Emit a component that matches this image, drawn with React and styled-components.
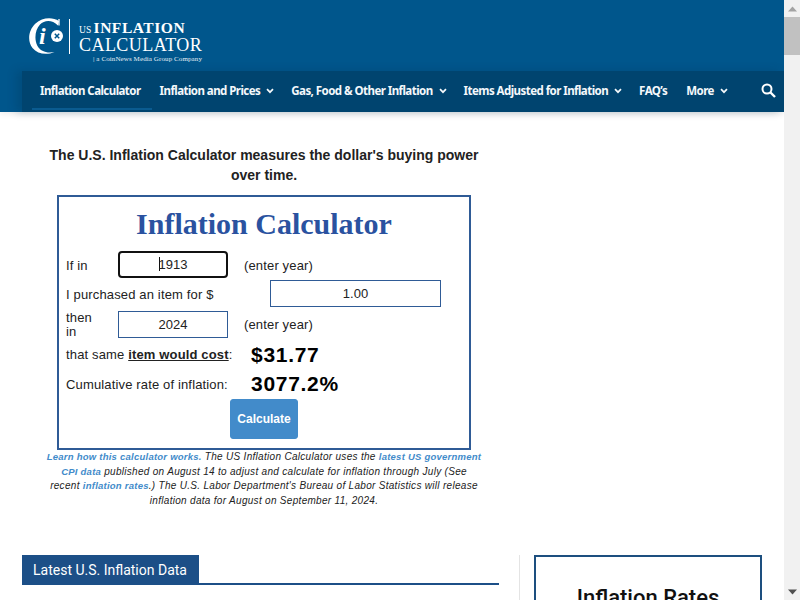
import React from "react";
import styled, { createGlobalStyle } from "styled-components";

const Global = createGlobalStyle`
  html, body { margin: 0; padding: 0; height: 600px; overflow: hidden; background: #fff; }
  body { font-family: "Liberation Sans", Arial, sans-serif; }
  * { box-sizing: border-box; }
`;

const Page = styled.div`
  display: flex;
  width: 800px;
  height: 600px;
  overflow: hidden;
`;
const Main = styled.div`
  width: 784px;
  height: 600px;
  overflow: hidden;
  flex: none;
`;
const Scrollbar = styled.div`
  width: 16px;
  height: 600px;
  flex: none;
  background: #f1f1f1;
  display: flex;
  flex-direction: column;
  align-items: center;
`;
const ScrollArrow = styled.div`
  height: 17px;
  flex: none;
  display: flex;
  align-items: center;
  justify-content: center;
`;
const ScrollThumb = styled.div`
  width: 100%;
  height: 38px;
  flex: none;
  background: #c1c1c1;
`;
const ScrollSpace = styled.div`
  flex: 1;
`;

const Header = styled.header`
  background: #00568c;
  height: 112px;
  display: flex;
  flex-direction: column;
  box-shadow: 0 2px 6px rgba(0, 0, 0, 0.08);
`;
const LogoRow = styled.div`
  height: 71px;
  flex: none;
  padding: 17px 0 0 28px;
  display: flex;
  align-items: flex-start;
`;
const LogoDivider = styled.div`
  width: 1px;
  height: 35px;
  margin: 2px 9px 0 5px;
  background: #fff;
`;
const LogoWords = styled.div`
  display: flex;
  flex-direction: column;
  color: #fff;
  font-family: "Liberation Serif", "Times New Roman", serif;
`;
const LogoTop = styled.div`
  display: flex;
  align-items: baseline;
  height: 17px;
  line-height: 17px;
  margin-top: 2px;
`;
const LogoUs = styled.span`
  font-size: 9.5px;
  margin-right: 2px;
  letter-spacing: 0.2px;
`;
const LogoStrong = styled.span`
  font-size: 15.5px;
  font-weight: 700;
  letter-spacing: 0.55px;
`;
const LogoBottom = styled.div`
  font-size: 18px;
  line-height: 17px;
  letter-spacing: 0.45px;
  height: 17px;
  margin-top: 1px;
`;
const LogoTag = styled.div`
  font-size: 7px;
  line-height: 8px;
  letter-spacing: 0.1px;
  margin: 1px 0 0 14px;
  white-space: nowrap;
  color: #e6eef4;
`;

const Nav = styled.nav`
  height: 41px;
  margin-left: 22px;
  padding: 0 0 2px 10px;
  background: #00446f;
  display: flex;
  align-items: stretch;
  box-shadow: -6px 0 8px rgba(0, 50, 85, 0.25);
`;
const NavItem = styled.a`
  display: flex;
  align-items: center;
  gap: 6px;
  height: 100%;
  padding: 2px ${(p) => p.$pad || 9}px 0 8px;
  color: #f4f8fb;
  font-family: "Noto Sans", sans-serif;
  font-size: 11.5px;
  font-weight: 700;
  letter-spacing: -0.55px;
  white-space: nowrap;
  border-bottom: 2px solid ${(p) => (p.$active ? "#0a5b90" : "transparent")};
`;
const NavSearch = styled.div`
  margin-left: auto;
  width: 23px;
  display: flex;
  align-items: center;
  color: #fff;
`;

const Content = styled.div`
  display: flex;
  padding: 0 0 0 22px;
  flex-direction: column;
`;
const TopArea = styled.div`
  width: 484px;
  padding-top: 33px;
  display: flex;
  flex-direction: column;
  align-items: center;
`;
const Intro = styled.p`
  margin: 0 0 10px;
  width: 445px;
  text-align: center;
  font-size: 14px;
  line-height: 20px;
  font-weight: 700;
  letter-spacing: 0;
  color: #222;
`;
const CalcBox = styled.div`
  width: 414px;
  height: 255px;
  border: 2px solid #2f5b96;
  padding: 0 7px;
  display: flex;
  flex-direction: column;
`;
const CalcTitle = styled.h1`
  margin: 8px 0 0;
  height: 46px;
  text-align: center;
  font-family: "Liberation Serif", "Times New Roman", serif;
  font-size: 30px;
  line-height: 38px;
  font-weight: 700;
  color: #2a52a0;
`;
const Row = styled.div`
  display: flex;
  align-items: center;
  height: ${(p) => p.$h}px;
  margin-bottom: ${(p) => p.$mb || 0}px;
  font-size: 13px;
  letter-spacing: 0.15px;
  color: #222;
`;
const Label = styled.div`
  width: ${(p) => p.$w}px;
  flex: none;
  line-height: 14px;
  padding-top: ${(p) => p.$top || 0}px;
`;
const Field = styled.div`
  width: ${(p) => p.$w}px;
  height: 27px;
  flex: none;
  border: ${(p) => (p.$focus ? "2px solid #111" : "1px solid #2f5b96")};
  border-radius: ${(p) => (p.$focus ? "4px" : "0")};
  display: flex;
  align-items: center;
  justify-content: center;
  font-size: 13px;
  letter-spacing: 0;
  color: #222;
  padding-bottom: 1px;
`;
const Caret = styled.span`
  display: inline-block;
  width: 1px;
  height: 14px;
  background: #111;
  margin-right: -1px;
`;
const Hint = styled.div`
  margin-left: 16px;
  padding-top: ${(p) => p.$top || 0}px;
`;
const Strong = styled.u`
  font-weight: 700;
`;
const Result = styled.div`
  font-size: 21px;
  font-weight: 700;
  color: #000;
  letter-spacing: 0.7px;
`;
const ButtonRow = styled.div`
  display: flex;
  justify-content: center;
`;
const CalcButton = styled.button`
  width: 68px;
  height: 40px;
  border: 1px solid #428bca;
  border-radius: 3px;
  background: #428bca;
  color: #fff;
  font-family: "Liberation Sans", Arial, sans-serif;
  font-size: 12px;
  font-weight: 700;
  padding: 0;
`;
const Note = styled.p`
  margin: 0;
  width: 436px;
  text-align: center;
  font-size: 10px;
  line-height: 14.5px;
  letter-spacing: 0.3px;
  font-style: italic;
  color: #222;
`;
const NoteLink = styled.a`
  color: #428bca;
  font-size: 9.5px;
  letter-spacing: 0.24px;
  font-weight: 700;
`;

const Lower = styled.div`
  display: flex;
  margin-top: 47px;
`;
const LeftCol = styled.div`
  width: 477px;
  flex: none;
`;
const SectionHead = styled.div`
  height: 30px;
  border-bottom: 2px solid #1c4f87;
`;
const SectionTab = styled.div`
  display: inline-flex;
  align-items: center;
  height: 28px;
  width: 177px;
  padding: 1px 0 0 11px;
  background: #1c4f87;
  color: #fff;
  font-family: Roboto, sans-serif;
  font-size: 14px;
  white-space: nowrap;
`;
const RightCol = styled.div`
  margin-left: 20px;
  padding-left: 14px;
  border-left: 1px solid #e4e4e4;
  height: 60px;
  flex: none;
`;
const RatesBox = styled.div`
  width: 228px;
  height: 80px;
  border: 2px solid #1d4f7f;
  border-bottom: 0;
  padding-top: 29px;
  text-align: center;
  font-family: Roboto, sans-serif;
  font-size: 22px;
  line-height: 24px;
  font-weight: 500;
  color: #111;
`;

const Chevron = () => (
  <svg width="8" height="6" viewBox="0 0 8 6" fill="none">
    <path d="M1 1.2 4 4.2 7 1.2" stroke="#f4f8fb" strokeWidth="1.7" />
  </svg>
);

const LogoMark = () => (
  <svg width="36" height="38" viewBox="0 0 36 38" fill="none">
    <path d="M31 4C24-.5 14 .5 7.500 6.500 .5 13 -1 24 4.500 31c5 6 14 7.500 22 4-7.500 1.500-14-.5-17-6-3.500-6.500-2.500-16 2.500-21.500C16.500 3 24 2.500 30 8.500Z" fill="#fff" />
    <path d="M31 8.500V2" stroke="#fff" strokeWidth="1.300" />
    <text x="11" y="27" fontFamily="Liberation Serif, serif" fontStyle="italic" fontWeight="700" fontSize="24" fill="#fff">i</text>
    <circle cx="29" cy="19" r="6" fill="#fff" />
    <path d="M26.800 16.800 31.200 21.200M31.200 16.800 26.800 21.200" stroke="#00568c" strokeWidth="1.500" />
  </svg>
);

export default function App() {
  return (
    <Page>
      <Global />
      <Main>
        <Header>
          <LogoRow>
            <LogoMark />
            <LogoDivider />
            <LogoWords>
              <LogoTop>
                <LogoUs>US</LogoUs>
                <LogoStrong>INFLATION</LogoStrong>
              </LogoTop>
              <LogoBottom>CALCULATOR</LogoBottom>
              <LogoTag>| a CoinNews Media Group Company</LogoTag>
            </LogoWords>
          </LogoRow>
          <Nav>
            <NavItem $active $pad={11}>Inflation Calculator</NavItem>
            <NavItem>Inflation and Prices <Chevron /></NavItem>
            <NavItem>Gas, Food &amp; Other Inflation <Chevron /></NavItem>
            <NavItem>Items Adjusted for Inflation <Chevron /></NavItem>
            <NavItem $pad={11}>FAQ’s</NavItem>
            <NavItem>More <Chevron /></NavItem>
            <NavSearch>
              <svg width="15" height="15" viewBox="0 0 15 15" fill="none">
                <circle cx="6" cy="6" r="4.500" stroke="#fff" strokeWidth="2" />
                <path d="M9.500 9.500 14 14" stroke="#fff" strokeWidth="2.400" />
              </svg>
            </NavSearch>
          </Nav>
        </Header>
        <Content>
          <TopArea>
            <Intro>The U.S. Inflation Calculator measures the dollar's buying power over time.</Intro>
            <CalcBox>
              <CalcTitle>Inflation Calculator</CalcTitle>
              <Row $h={27} $mb={2}>
                <Label $w={52} $top={2}>If in</Label>
                <Field $w={110} $focus><Caret />1913</Field>
                <Hint $top={1}>(enter year)</Hint>
              </Row>
              <Row $h={27} $mb={4}>
                <Label $w={204} $top={3}>I purchased an item for $</Label>
                <Field $w={171}>1.00</Field>
              </Row>
              <Row $h={27} $mb={2}>
                <Label $w={52}>then<br />in</Label>
                <Field $w={110}>2024</Field>
                <Hint>(enter year)</Hint>
              </Row>
              <Row $h={29}>
                <Label $w={185}>that same <Strong>item would cost</Strong>:</Label>
                <Result>$31.77</Result>
              </Row>
              <Row $h={30}>
                <Label $w={185} $top={1}>Cumulative rate of inflation:</Label>
                <Result>3077.2%</Result>
              </Row>
              <ButtonRow>
                <CalcButton>Calculate</CalcButton>
              </ButtonRow>
            </CalcBox>
            <Note>
              <NoteLink>Learn how this calculator works.</NoteLink> The US Inflation Calculator uses the{" "}
              <NoteLink>latest US government CPI data</NoteLink> published on August 14 to adjust and calculate for inflation through July (See recent{" "}
              <NoteLink>inflation rates</NoteLink>.) The U.S. Labor Department's Bureau of Labor Statistics will release inflation data for August on September 11, 2024.
            </Note>
          </TopArea>
          <Lower>
            <LeftCol>
              <SectionHead>
                <SectionTab>Latest U.S. Inflation Data</SectionTab>
              </SectionHead>
            </LeftCol>
            <RightCol>
              <RatesBox>Inflation Rates</RatesBox>
            </RightCol>
          </Lower>
        </Content>
      </Main>
      <Scrollbar>
        <ScrollArrow>
          <svg width="9" height="6" viewBox="0 0 9 6"><path d="M4.500 0.500 9 5.500H0Z" fill="#a3a3a3" /></svg>
        </ScrollArrow>
        <ScrollThumb />
        <ScrollSpace />
        <ScrollArrow>
          <svg width="9" height="6" viewBox="0 0 9 6"><path d="M4.500 5.500 9 0.500H0Z" fill="#505050" /></svg>
        </ScrollArrow>
      </Scrollbar>
    </Page>
  );
}
